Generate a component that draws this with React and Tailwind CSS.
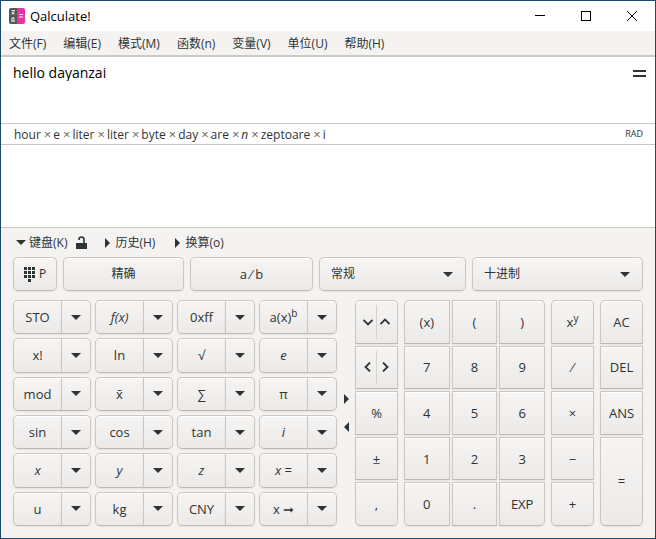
import React from "react";

const FONT = "font-['Open_Sans','Noto_Sans_CJK_SC',sans-serif]";
const FACE =
  "border border-[#cdc7c2] border-b-[#bfb8b1] bg-linear-to-b from-[#f6f5f3] to-[#ebeae8] shadow-[inset_0_1px_0_#fff,0_1px_2px_rgba(0,0,0,0.07)] leading-4 text-[#2e3436]";
const KEY_TEXT = "text-[13px]";

function Triangle({ dir = "down" }) {
  const shapes = {
    down: { w: 10, h: 5, d: "M0 0H10L5 5Z" },
    right: { w: 5, h: 10, d: "M0 0V10L5 5Z" },
    left: { w: 5, h: 10, d: "M5 0V10L0 5Z" },
  };
  const s = shapes[dir];
  return (
    <svg width={s.w} height={s.h} viewBox={`0 0 ${s.w} ${s.h}`} fill="#2e3436" aria-hidden="true">
      <path d={s.d} />
    </svg>
  );
}

function Chevron({ d }) {
  return (
    <svg width="10" height="10" viewBox="0 0 10 10" fill="none" stroke="#2e3436" strokeWidth="1.8" aria-hidden="true">
      <path d={d} />
    </svg>
  );
}

function AppIcon() {
  return (
    <svg width="16" height="16" viewBox="0 0 16 16" aria-hidden="true">
      <path d="M2 0H8V16H2Q0 16 0 14V2Q0 0 2 0Z" fill="#555557" />
      <path d="M8 0H14Q16 0 16 2V14Q16 16 14 16H8Z" fill="#e733a0" />
      <path d="M10 6.5H14M10 9H14" stroke="#fff" strokeWidth="1.2" />
      <path
        d="M2.4 2.5H5.8M5.6 3L2.6 6.4M3 3.8L5.4 6.3M2 13.2H3.6Q1.9 9.8 4 9.6Q6.1 9.8 4.4 13.2H6"
        stroke="#dcdcdc"
        strokeWidth="1.1"
        fill="none"
      />
    </svg>
  );
}

function TitleBar() {
  return (
    <header className="flex h-[30px] items-center bg-white pl-2 text-black">
      <AppIcon />
      <h1 className="ml-[5px] flex-1 text-[13px] leading-4">Qalculate!</h1>
      <button aria-label="Minimize" className="flex h-full w-[46px] items-center justify-center">
        <svg width="10" height="10" stroke="#000" fill="none"><path d="M0 4.5H10" /></svg>
      </button>
      <button aria-label="Maximize" className="flex h-full w-[46px] items-center justify-center">
        <svg width="10" height="10" stroke="#000" fill="none"><rect x=".5" y=".5" width="9" height="9" /></svg>
      </button>
      <button aria-label="Close" className="flex h-full w-[46px] items-center justify-center">
        <svg width="10" height="10" stroke="#000" fill="none"><path d="M0 0L10 10M10 0L0 10" /></svg>
      </button>
    </header>
  );
}

const MENUS = ["文件(F)", "编辑(E)", "模式(M)", "函数(n)", "变量(V)", "单位(U)", "帮助(H)"];

function Expander({ open, children }) {
  return (
    <button aria-expanded={!!open} className="flex items-center">
      <span className="flex w-4 justify-center"><Triangle dir={open ? "down" : "right"} /></span>
      {children}
    </button>
  );
}

function Combo({ label, value, className }) {
  return (
    <div className={`relative min-w-0 ${className}`}>
      <select aria-label={label} className={`h-[34px] w-full appearance-none rounded-[5px] pr-8 pl-[11px] ${FACE} text-[12px]`}>
        <option>{value}</option>
      </select>
      <span className="pointer-events-none absolute inset-y-0 right-[13px] flex items-center">
        <Triangle />
      </span>
    </div>
  );
}

const FUNCTIONS = [
  "STO", <i>f(x)</i>, "0xff", <span>a(x)<sup className="text-[10px]">b</sup></span>,
  "x!", "ln", "√", <i>e</i>,
  "mod", "x̄", "∑", "π",
  "sin", "cos", "tan", <i>i</i>,
  <i>x</i>, <i>y</i>, <i>z</i>, <span><i>x</i> =</span>,
  "u", "kg", "CNY", "x ➞",
];

function SplitKey({ children }) {
  return (
    <div className="flex min-h-[34px] min-w-0">
      <button className={`flex min-w-0 flex-1 items-center justify-center rounded-l-[5px] ${FACE} ${KEY_TEXT}`}>{children}</button>
      <button aria-label="More" className={`-ml-px flex w-[30px] items-center justify-center rounded-r-[5px] ${FACE}`}>
        <Triangle />
      </button>
    </div>
  );
}

function Key({ children, className = "" }) {
  return <button className={`flex min-h-[43px] min-w-0 items-center justify-center ${FACE} ${KEY_TEXT} ${className}`}>{children}</button>;
}

function PairKey({ first, second, labels, className = "" }) {
  return (
    <div className={`flex min-h-[43px] items-stretch justify-center py-1 ${FACE} ${className}`}>
      <button aria-label={labels[0]} className="flex flex-1 items-center justify-end pr-[3px]"><Chevron d={first} /></button>
      <span className="w-px bg-[#d5d1cc]" />
      <button aria-label={labels[1]} className="flex flex-1 items-center pl-[3px]"><Chevron d={second} /></button>
    </div>
  );
}

const DIGITS = ["(x)", "(", ")", "7", "8", "9", "4", "5", "6", "1", "2", "3", "0", ".", "EXP"];
const DIGIT_CORNERS = { 0: "rounded-tl-[5px]", 2: "rounded-tr-[5px]", 12: "rounded-bl-[5px]", 14: "rounded-br-[5px]" };
const COLUMN = "grid grid-rows-5 gap-[2px]";

function Times() {
  return <span className="mr-[2px] ml-[3px] text-[13px] text-[#6a6256]">×</span>;
}

const PARSED = ["hour", "e", "liter", "liter", "byte", "day", "are", <i>n</i>, "zeptoare", "i"];

export default function App() {
  return (
    <div className={`flex min-h-screen flex-col border border-[#1c4a6c] bg-[#f4f3f2] text-[12px] leading-4 text-[#2e3436] ${FONT}`}>
      <TitleBar />
      <nav className="flex h-[26px] items-center gap-[17px] border-b-2 border-[#cdc9c3] px-2 pt-px">
        {MENUS.map((m) => <button key={m}>{m}</button>)}
      </nav>
      <div className="flex h-[66px] items-start bg-white pt-2 pr-2 pl-3">
        <input aria-label="Expression" defaultValue="hello dayanzai" className="min-w-0 flex-1 text-[14px] leading-4 text-black outline-none" />
        <button aria-label="Calculate" className="flex h-4 w-4 items-center justify-center">
          <svg width="13" height="7" fill="#2e3436"><path d="M0 0H13V2H0ZM0 5H13V7H0Z" /></svg>
        </button>
      </div>
      <div className="flex h-[22px] items-center border-y border-[#cdc7c2] bg-white pr-3 pl-[13px]">
        <output className="flex-1">
          {PARSED.map((p, i) => <React.Fragment key={i}>{i > 0 && <Times />}{p}</React.Fragment>)}
        </output>
        <span className="text-[9px]">RAD</span>
      </div>
      <div className="h-[83px] border-b border-[#cdc7c2] bg-white" />

      <main className="flex flex-1 flex-col px-3 pb-3">
        <div className="flex h-[29px] items-center">
          <Expander open>键盘(K)</Expander>
          <button aria-label="Lock keypad" className="mr-3 ml-2">
            <svg width="12" height="14" viewBox="0 0 12 14" fill="#2e3436" aria-hidden="true">
              <path d="M1 7H12V13H1Z" />
              <path d="M4 4V3.5Q4 1 6.5 1Q9 1 9 3.5V7" fill="none" stroke="#2e3436" strokeWidth="1.6" />
            </svg>
          </button>
          <div className="flex gap-[14px]">
            <Expander>历史(H)</Expander>
            <Expander>换算(o)</Expander>
          </div>
        </div>

        <div className="flex gap-[6px]">
          <button className={`flex h-[34px] w-11 items-center justify-center gap-1 rounded-[5px] ${FACE} text-[12px]`}>
            <svg width="11" height="15" fill="#2e3436" aria-hidden="true">
              <path d="M0 0h3v3h-3zM4 0h3v3h-3zM8 0h3v3h-3zM0 4h3v3h-3zM4 4h3v3h-3zM8 4h3v3h-3zM0 8h3v3h-3zM4 8h3v3h-3zM8 8h3v3h-3zM4 12h3v3h-3z" />
            </svg>
            <span>P</span>
          </button>
          <button className={`h-[34px] min-w-0 flex-[119] rounded-[5px] ${FACE} text-[12px]`}>精确</button>
          <button className={`h-[34px] min-w-0 flex-[121] rounded-[5px] ${FACE} ${KEY_TEXT}`}>a ⁄ b</button>
          <Combo label="Display mode" value="常规" className="flex-[147]" />
          <Combo label="Number base" value="十进制" className="flex-[171]" />
        </div>

        <div className="mt-[9px] flex flex-1">
          <div className="grid min-w-0 flex-[324] grid-cols-4 grid-rows-6 gap-1">
            {FUNCTIONS.map((f, i) => <SplitKey key={i}>{f}</SplitKey>)}
          </div>
          <div className="flex w-[18px] flex-col items-center justify-center gap-[18px]">
            <button aria-label="Hide left keypad"><Triangle dir="right" /></button>
            <button aria-label="Hide right keypad"><Triangle dir="left" /></button>
          </div>
          <div className="flex min-w-0 flex-[288] gap-[6px]">
            <div className={`${COLUMN} min-w-0 flex-[43]`}>
              <PairKey labels={["Down", "Up"]} first="M0.5 3L5 7.5L9.5 3" second="M0.5 7L5 2.5L9.5 7" className="rounded-t-[5px]" />
              <PairKey labels={["Left", "Right"]} first="M7 0.5L2.5 5L7 9.5" second="M3 0.5L7.5 5L3 9.5" />
              <Key>%</Key>
              <Key>±</Key>
              <Key className="rounded-b-[5px]">,</Key>
            </div>
            <div className={`${COLUMN} min-w-0 flex-[141] grid-cols-3`}>
              {DIGITS.map((d, i) => <Key key={d} className={DIGIT_CORNERS[i]}>{d}</Key>)}
            </div>
            <div className={`${COLUMN} min-w-0 flex-[43]`}>
              <Key className="rounded-t-[5px]"><span>x<sup className="text-[10px]">y</sup></span></Key>
              <Key>⁄</Key>
              <Key>×</Key>
              <Key>−</Key>
              <Key className="rounded-b-[5px]">+</Key>
            </div>
            <div className={`${COLUMN} min-w-0 flex-[43]`}>
              <Key className="rounded-t-[5px]">AC</Key>
              <Key>DEL</Key>
              <Key>ANS</Key>
              <Key className="row-span-2 rounded-b-[5px]">=</Key>
            </div>
          </div>
        </div>
      </main>
    </div>
  );
}
